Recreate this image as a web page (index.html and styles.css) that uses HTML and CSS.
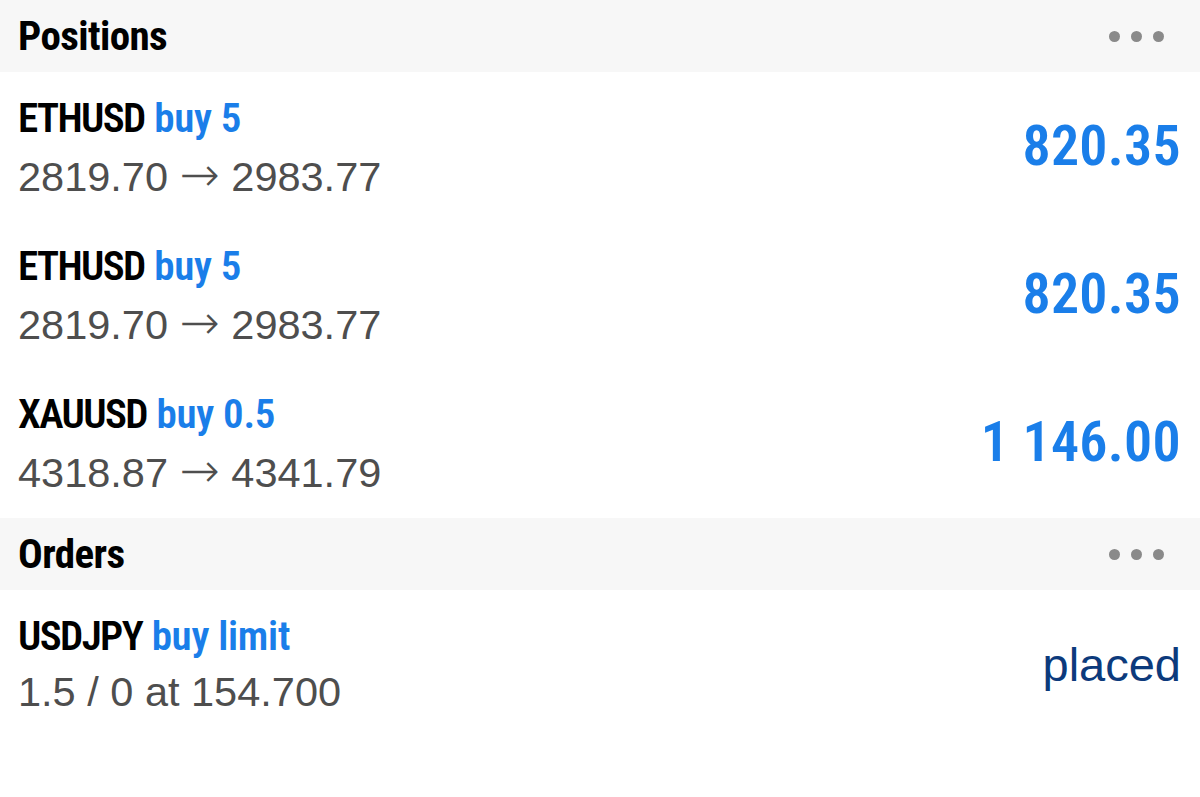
FILE: index.html
```html
<!DOCTYPE html>
<html>
<head>
<meta charset="utf-8">
<link rel="stylesheet" href="styles.css">
</head>
<body>
<div class="screen">
  <div class="section-head">
    <div class="section-title">Positions</div>
    <div class="dots"><span></span><span></span><span></span></div>
  </div>
  <div class="row">
    <div class="info">
      <div class="title"><span class="sym">ETHUSD</span> <span class="side">buy 5</span></div>
      <div class="sub">2819.70 <span class="arrow">→</span> 2983.77</div>
    </div>
    <div class="value">820.35</div>
  </div>
  <div class="row">
    <div class="info">
      <div class="title"><span class="sym">ETHUSD</span> <span class="side">buy 5</span></div>
      <div class="sub">2819.70 <span class="arrow">→</span> 2983.77</div>
    </div>
    <div class="value">820.35</div>
  </div>
  <div class="row">
    <div class="info">
      <div class="title"><span class="sym">XAUUSD</span> <span class="side">buy 0.5</span></div>
      <div class="sub">4318.87 <span class="arrow">→</span> 4341.79</div>
    </div>
    <div class="value">1 146.00</div>
  </div>
  <div class="section-head second">
    <div class="section-title">Orders</div>
    <div class="dots"><span></span><span></span><span></span></div>
  </div>
  <div class="row">
    <div class="info">
      <div class="title"><span class="sym">USDJPY</span> <span class="side">buy limit</span></div>
      <div class="sub">1.5 / 0 at 154.700</div>
    </div>
    <div class="status">placed</div>
  </div>
</div>
</body>
</html>
```
FILE: styles.css
```css
html, body {
  margin: 0;
  padding: 0;
  background: #ffffff;
}
.screen {
  width: 1200px;
  height: 797px;
  overflow: hidden;
  background: #ffffff;
}
.section-head {
  height: 72px;
  background: #f7f7f7;
  display: flex;
  align-items: center;
  justify-content: space-between;
  padding: 0 36px 0 18px;
  box-sizing: border-box;
}
.section-head.second {
  margin-top: 2px;
}
.section-title {
  font-family: "Roboto Condensed", "Roboto", sans-serif;
  font-stretch: 75%;
  font-weight: bold;
  font-size: 41px;
  letter-spacing: -0.6px;
  color: #000;
}
.dots {
  display: flex;
  gap: 11px;
}
.dots span {
  width: 11px;
  height: 11px;
  border-radius: 50%;
  background: #8a8a8a;
}
.row {
  height: 148px;
  display: flex;
  align-items: center;
  justify-content: space-between;
  padding: 0 19px 0 18px;
  box-sizing: border-box;
}
.info {
  display: flex;
  flex-direction: column;
  align-self: flex-start;
  padding-top: 20px;
}
.title {
  font-family: "Roboto Condensed", "Roboto", sans-serif;
  font-stretch: 75%;
  font-weight: 600;
  font-size: 41px;
  line-height: 52px;
}
.sym {
  color: #000;
  letter-spacing: -1.6px;
}
.side {
  color: #1a7ee9;
  letter-spacing: -0.3px;
}
.sub {
  font-family: "Liberation Sans", Arial, sans-serif;
  font-size: 41.5px;
  line-height: 60px;
  color: #4e4e4e;
}
.arrow {
  font-family: "DejaVu Sans", sans-serif;
  font-weight: 200;
  font-size: 48px;
}
.value {
  font-family: "Roboto Condensed", "Roboto", sans-serif;
  font-stretch: 75%;
  font-weight: 600;
  font-size: 56px;
  letter-spacing: 0.3px;
  color: #1a7ee9;
}
.status {
  font-family: "Liberation Sans", Arial, sans-serif;
  font-size: 47px;
  color: #0c3a7c;
}
```
